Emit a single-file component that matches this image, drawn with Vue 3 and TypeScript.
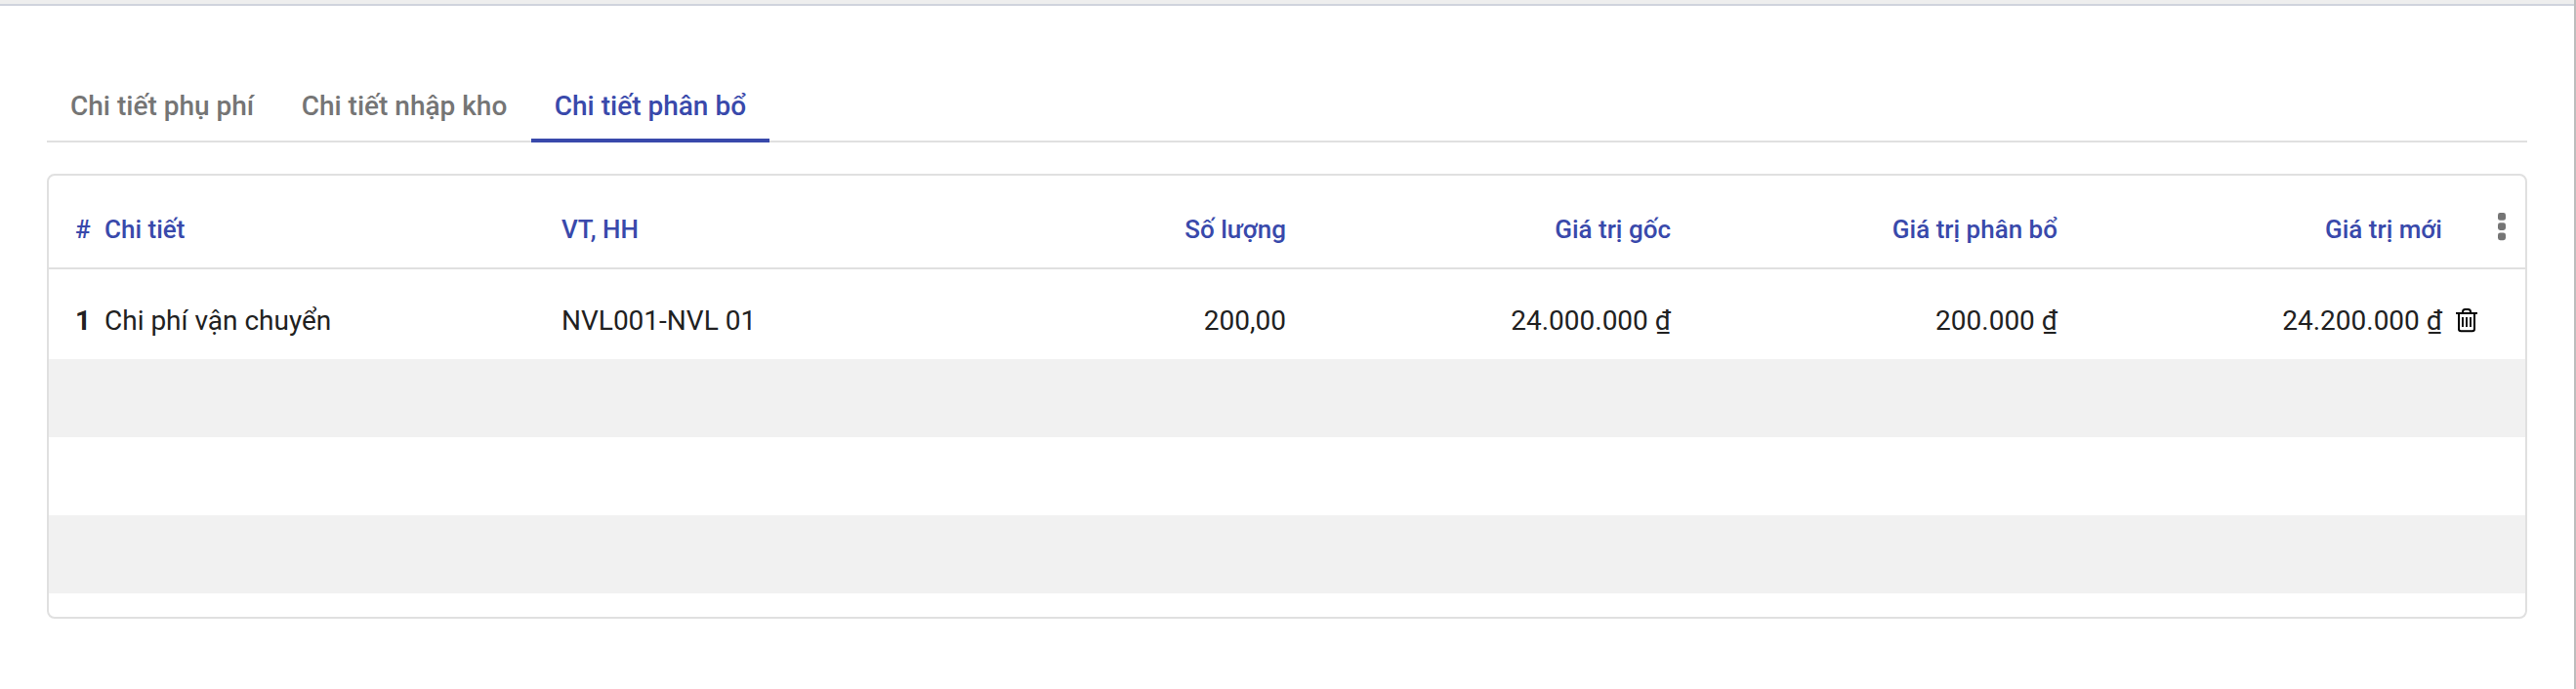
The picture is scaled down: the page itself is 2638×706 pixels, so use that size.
<script setup lang="ts">
import { ref } from 'vue'

interface Column {
  key: string
  label: string
  numeric?: boolean
}

const tabs: string[] = ['Chi tiết phụ phí', 'Chi tiết nhập kho', 'Chi tiết phân bổ']
const activeTab = ref<number>(2)

const columns: Column[] = [
  { key: 'detail', label: 'Chi tiết' },
  { key: 'item', label: 'VT, HH' },
  { key: 'quantity', label: 'Số lượng', numeric: true },
  { key: 'original', label: 'Giá trị gốc', numeric: true },
  { key: 'allocated', label: 'Giá trị phân bổ', numeric: true },
  { key: 'updated', label: 'Giá trị mới', numeric: true },
]

const rows = ref<Record<string, string>[]>([
  {
    detail: 'Chi phí vận chuyển',
    item: 'NVL001-NVL 01',
    quantity: '200,00',
    original: '24.000.000 ₫',
    allocated: '200.000 ₫',
    updated: '24.200.000 ₫',
  },
])
</script>

<template>
  <main class="page">
    <nav class="tabs">
      <button
        v-for="(tab, i) in tabs"
        :key="tab"
        class="tab"
        :class="{ active: i === activeTab }"
        @click="activeTab = i"
      >
        {{ tab }}
      </button>
    </nav>
    <section class="card">
      <div class="grid head">
        <span class="index">#</span>
        <span v-for="c in columns" :key="c.key" :class="{ num: c.numeric }">{{ c.label }}</span>
        <span class="menu">
          <svg width="8" height="29" viewBox="0 0 8 29">
            <rect width="8" height="7.8" rx="2.4" />
            <rect y="10.2" width="8" height="7.8" rx="2.4" />
            <rect y="20.4" width="8" height="7.8" rx="2.4" />
          </svg>
        </span>
      </div>
      <div v-for="(row, i) in rows" :key="i" class="grid row">
        <span class="index">{{ i + 1 }}</span>
        <span v-for="c in columns" :key="c.key" :class="{ num: c.numeric }">{{ row[c.key] }}</span>
        <span class="remove">
          <svg width="22" height="25" viewBox="0 0 22 25" fill="none" stroke="#000" stroke-width="2">
            <path d="M0 5H22" />
            <path d="M7 5V3.500Q7 1 9.500 1H12.500Q15 1 15 3.500V5" />
            <path d="M3 5V21Q3 23.200 5.200 23.200H16.800Q19 23.200 19 21V5" />
            <path d="M7 9V19M11 9V19M15 9V19" stroke-width="1.800" />
          </svg>
        </span>
      </div>
      <div class="blank shaded"></div>
      <div class="blank"></div>
      <div class="blank shaded"></div>
    </section>
  </main>
</template>

<style>
body {
  margin: 0;
  background: #fff;
}
</style>

<style scoped>
.page {
  box-sizing: border-box;
  height: 706px;
  padding: 66px 48px 0;
  border-right: 2px solid #bdbdbd;
  background: linear-gradient(#eee 0 4px, #d0d3dd 4px 6px, #fff 6px);
  font-family: Roboto, "Noto Sans", sans-serif;
  font-size: 28px;
  color: #212121;
}
.tabs {
  display: flex;
  gap: 0.5px;
  height: 78px;
  border-bottom: 2px solid #e0e0e0;
}
.tab {
  height: 80px;
  padding: 9px 24px 0;
  border: 0;
  border-bottom: 4px solid transparent;
  background: none;
  font: 500 28px/67px Roboto, "Noto Sans", sans-serif;
  color: #757575;
  white-space: nowrap;
}
.tab.active {
  border-bottom-color: #3949ab;
  color: #3949ab;
}
.card {
  box-sizing: border-box;
  height: 456px;
  margin-top: 32px;
  border: 2px solid #e0e0e0;
  border-radius: 8px;
  overflow: hidden;
}
.grid {
  display: grid;
  grid-template-columns: 30px 468px 346px 396px 394px 396px 394px 1fr;
  box-sizing: border-box;
  padding-left: 27px;
  white-space: nowrap;
}
.head {
  height: 96px;
  padding-top: 15px;
  border-bottom: 2px solid #e0e0e0;
  font-size: 26px;
  font-weight: 500;
  line-height: 80px;
  color: #3949ab;
}
.row {
  height: 92px;
  padding-top: 12px;
  line-height: 81px;
}
.num {
  text-align: right;
}
.row .index {
  font-weight: 700;
}
.menu,
.remove {
  display: flex;
  align-items: flex-start;
}
.menu {
  padding: 23px 0 0 57px;
  fill: #757575;
}
.remove {
  padding: 28px 0 0 14px;
}
.blank {
  height: 80px;
}
.shaded {
  background: #f1f1f1;
}
</style>
